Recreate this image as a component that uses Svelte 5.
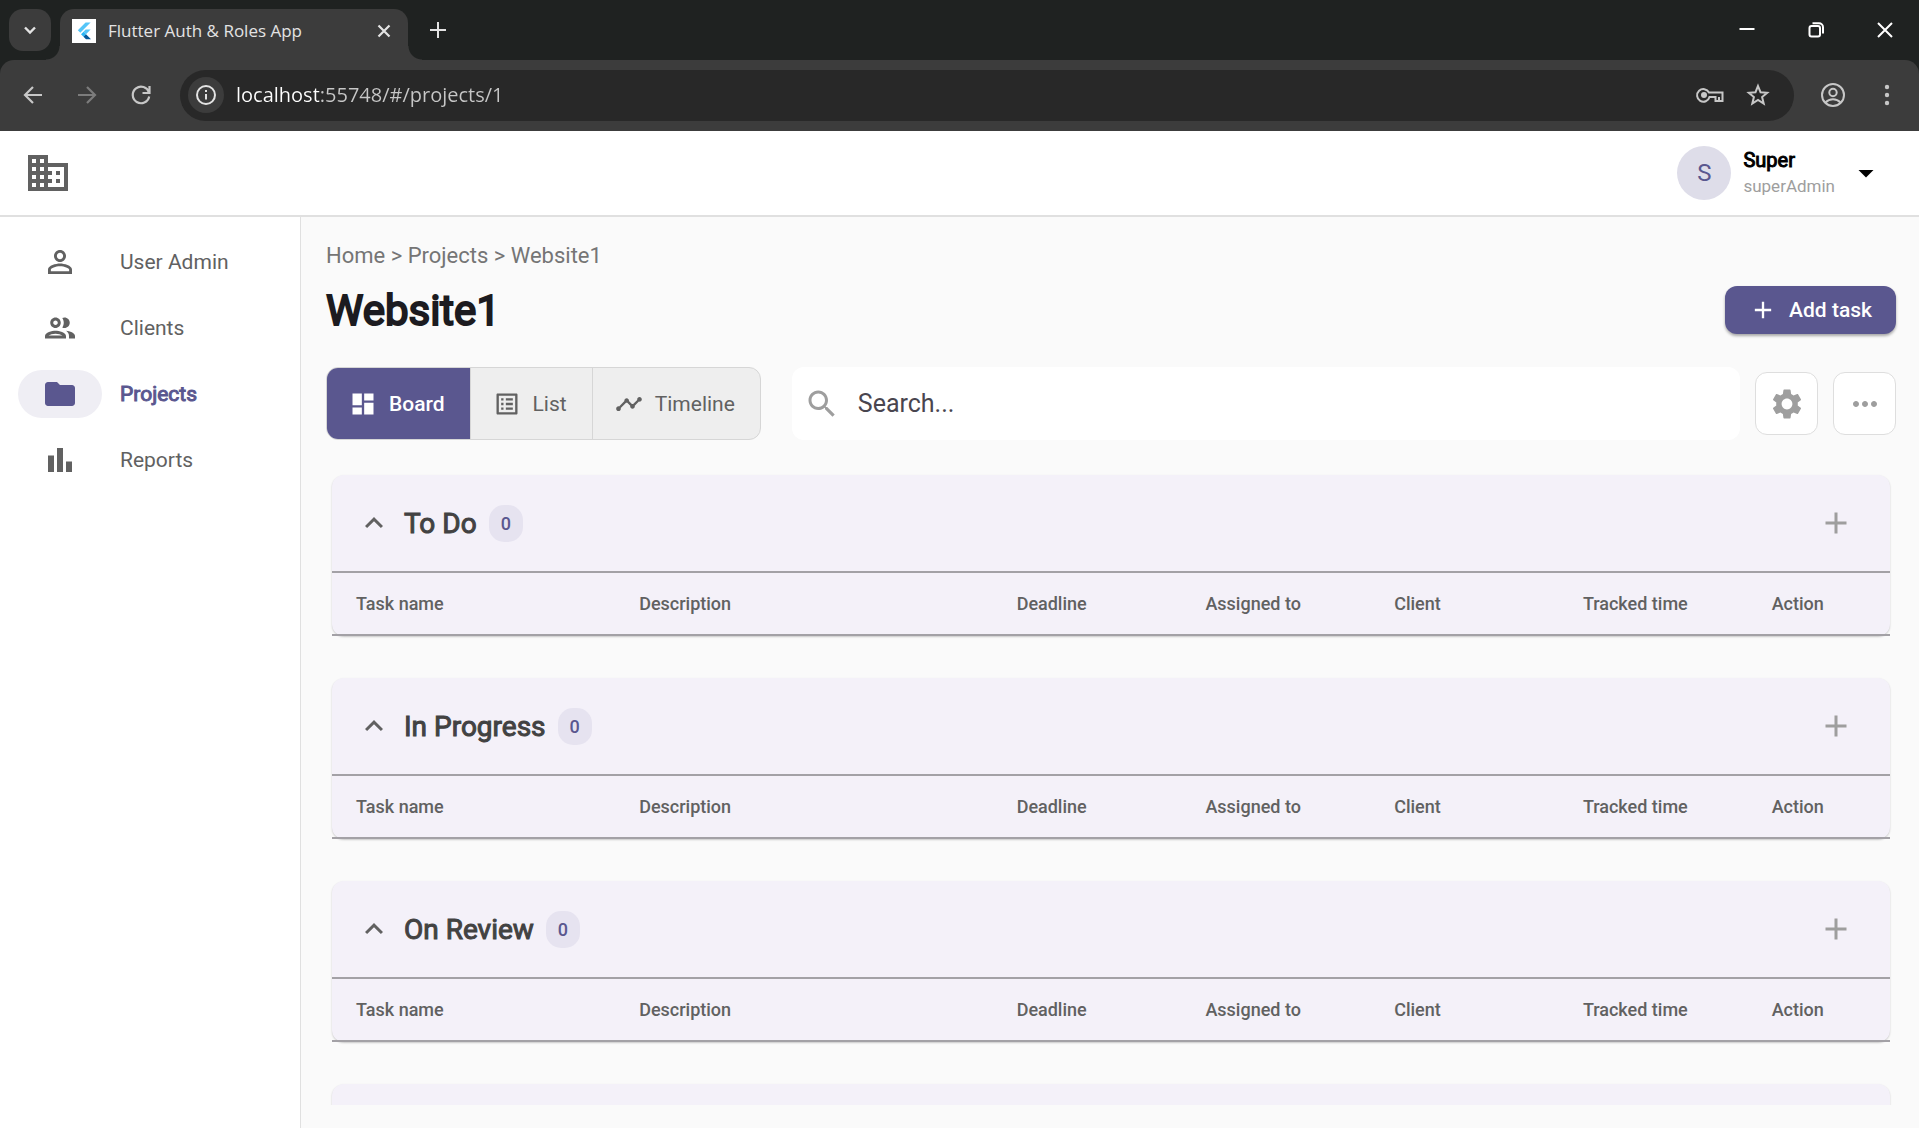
<script>
  const icons = {
    business: 'M12 7V3H2v18h20V7H12zM6 19H4v-2h2v2zm0-4H4v-2h2v2zm0-4H4V9h2v2zm0-4H4V5h2v2zm4 12H8v-2h2v2zm0-4H8v-2h2v2zm0-4H8V9h2v2zm0-4H8V5h2v2zm10 12h-8v-2h2v-2h-2v-2h2v-2h-2V9h8v10zm-2-8h-2v2h2v-2zm0 4h-2v2h2v-2z',
    person: 'M12 5.9c1.16 0 2.1.94 2.1 2.1s-.94 2.1-2.1 2.1S9.9 9.16 9.9 8s.94-2.1 2.1-2.1m0 9c2.97 0 6.1 1.46 6.1 2.1v1.1H5.9V17c0-.64 3.13-2.1 6.1-2.1M12 4C9.79 4 8 5.79 8 8s1.79 4 4 4 4-1.79 4-4-1.79-4-4-4zm0 9c-2.67 0-8 1.34-8 4v3h16v-3c0-2.66-5.33-4-8-4z',
    people: 'M9 13.75c-2.34 0-7 1.17-7 3.5V19h14v-1.75c0-2.33-4.66-3.5-7-3.5zM4.34 17c.84-.58 2.87-1.25 4.66-1.25s3.82.67 4.66 1.25H4.34zM9 12c1.93 0 3.5-1.57 3.5-3.5S10.93 5 9 5 5.5 6.57 5.5 8.5 7.07 12 9 12zm0-5c.83 0 1.5.67 1.5 1.5S9.83 10 9 10s-1.5-.67-1.5-1.5S8.17 7 9 7zm7.04 6.81c1.16.84 1.96 1.96 1.96 3.44V19h4v-1.75c0-2.02-3.5-3.17-5.96-3.44zM15 12c1.93 0 3.5-1.57 3.5-3.5S16.93 5 15 5c-.54 0-1.04.13-1.5.35.63.89 1 1.98 1 3.15s-.37 2.26-1 3.15c.46.22.96.35 1.5.35z',
    folder: 'M10 4H4c-1.1 0-1.99.9-1.99 2L2 18c0 1.1.9 2 2 2h16c1.1 0 2-.9 2-2V8c0-1.1-.9-2-2-2h-8l-2-2z',
    bars: 'M4 9h4v11H4zm12 4h4v7h-4zm-6-9h4v16h-4z',
    board: 'M3 13h8V3H3v10zm0 8h8v-6H3v6zm10 0h8V11h-8v10zm0-18v6h8V3h-8z',
    list: 'M19 5v14H5V5h14m1.1-2H3.9c-.5 0-.9.4-.9.9v16.2c0 .4.4.9.9.9h16.2c.4 0 .9-.5.9-.9V3.9c0-.5-.5-.9-.9-.9zM11 7h6v2h-6V7zm0 4h6v2h-6v-2zm0 4h6v2h-6zM7 7h2v2H7zm0 4h2v2H7zm0 4h2v2H7z',
    timeline: 'M23 8c0 1.1-.9 2-2 2-.18 0-.35-.02-.51-.07l-3.56 3.55c.05.16.07.34.07.52 0 1.1-.9 2-2 2s-2-.9-2-2c0-.18.02-.36.07-.52l-2.55-2.55c-.16.05-.34.07-.52.07s-.36-.02-.52-.07l-4.55 4.56c.05.16.07.33.07.51 0 1.1-.9 2-2 2s-2-.9-2-2 .9-2 2-2c.18 0 .35.02.51.07l4.56-4.55C8.02 9.36 8 9.18 8 9c0-1.1.9-2 2-2s2 .9 2 2c0 .18-.02.36-.07.52l2.55 2.55c.16-.05.34-.07.52-.07s.36.02.52.07l3.55-3.56C19.02 8.35 19 8.18 19 8c0-1.1.9-2 2-2s2 .9 2 2z',
    search: 'M15.5 14h-.79l-.28-.27C15.41 12.59 16 11.11 16 9.5 16 5.91 13.09 3 9.5 3S3 5.91 3 9.5 5.91 16 9.5 16c1.61 0 3.09-.59 4.23-1.57l.27.28v.79l5 4.99L20.49 19l-4.99-5zm-6 0C7.01 14 5 11.99 5 9.5S7.01 5 9.5 5 14 7.01 14 9.5 11.99 14 9.5 14z',
    settings: 'M19.14 12.94c.04-.3.06-.61.06-.94 0-.32-.02-.64-.07-.94l2.03-1.58c.18-.14.23-.41.12-.61l-1.92-3.32c-.12-.22-.37-.29-.59-.22l-2.39.96c-.5-.38-1.03-.7-1.62-.94l-.36-2.54c-.04-.24-.24-.41-.48-.41h-3.84c-.24 0-.43.17-.47.41l-.36 2.54c-.59.24-1.13.57-1.62.94l-2.39-.96c-.22-.08-.47 0-.59.22L2.74 8.87c-.12.21-.08.47.12.61l2.03 1.58c-.05.3-.09.63-.09.94s.02.64.07.94l-2.03 1.58c-.18.14-.23.41-.12.61l1.92 3.32c.12.22.37.29.59.22l2.39-.96c.5.38 1.03.7 1.62.94l.36 2.54c.05.24.24.41.48.41h3.84c.24 0 .44-.17.47-.41l.36-2.54c.59-.24 1.13-.56 1.62-.94l2.39.96c.22.08.47 0 .59-.22l1.92-3.32c.12-.22.07-.47-.12-.61l-2.01-1.58zM12 15.6c-1.98 0-3.6-1.62-3.6-3.6s1.62-3.6 3.6-3.6 3.6 1.62 3.6 3.6-1.62 3.6-3.6 3.6z',
    more: 'M6 10c-1.1 0-2 .9-2 2s.9 2 2 2 2-.9 2-2-.9-2-2-2zm12 0c-1.1 0-2 .9-2 2s.9 2 2 2 2-.9 2-2-.9-2-2-2zm-6 0c-1.1 0-2 .9-2 2s.9 2 2 2 2-.9 2-2-.9-2-2-2z',
    add: 'M19 13h-6v6h-2v-6H5v-2h6V5h2v6h6v2z',
    collapse: 'M12 8l-6 6 1.41 1.41L12 10.83l4.59 4.58L18 14z',
    dropdown: 'M7 10l5 5 5-5z'
  };

  const nav = [
    { label: 'User Admin', icon: 'person', href: '#/users' },
    { label: 'Clients', icon: 'people', href: '#/clients' },
    { label: 'Projects', icon: 'folder', href: '#/projects', active: true },
    { label: 'Reports', icon: 'bars', href: '#/reports' }
  ];
  const views = [
    { label: 'Board', icon: 'board' },
    { label: 'List', icon: 'list' },
    { label: 'Timeline', icon: 'timeline' }
  ];
  const columns = ['Task name', 'Description', 'Deadline', 'Assigned to', 'Client', 'Tracked time', 'Action'];

  let view = $state('Board');
  let query = $state('');
  let address = $state('localhost:55748/#/projects/1');
  let groups = $state([
    { title: 'To Do', count: 0, open: true },
    { title: 'In Progress', count: 0, open: true },
    { title: 'On Review', count: 0, open: true }
  ]);
</script>

{#snippet icon(name, size)}
  <svg class="icon {size}" viewBox="0 0 24 24" aria-hidden="true"><path d={icons[name]} /></svg>
{/snippet}

<div class="window">
  <div class="titlebar">
    <button class="tab-search" aria-label="Search tabs">
      <svg class="line" width="20" height="20" viewBox="0 0 20 20"><path d="M5 7.5l5 5 5-5" stroke-width="2.4" /></svg>
    </button>
    <div class="tab">
      <svg class="favicon" width="24" height="24" viewBox="0 0 24 24" aria-hidden="true">
        <path fill="#fff" d="M0 0h24v24H0z" />
        <path fill="#54c5f8" d="M13.6 3.4h5L8.3 13.7 5.8 11.2z" />
        <path fill="#54c5f8" d="M13.6 10.6h5L14 15.2l-2.5-2.5z" />
        <path fill="#29b6f6" d="M9 15.2l2.5-2.5 2.5 2.5-2.5 2.5z" />
        <path fill="#01579b" d="M11.5 17.7l2.5-2.5 5 5h-5z" />
      </svg>
      <span class="tab-title">Flutter Auth &amp; Roles App</span>
      <button class="bare" aria-label="Close tab">
        <svg class="line" width="20" height="20" viewBox="0 0 20 20"><path d="M4.5 4.5l11 11m0-11l-11 11" stroke-width="2.2" /></svg>
      </button>
    </div>
    <button class="bare new-tab" aria-label="New tab">
      <svg class="line" width="20" height="20" viewBox="0 0 20 20"><path d="M10 2v16M2 10h16" stroke-width="2" /></svg>
    </button>
    <div class="window-controls">
      <button class="bare" aria-label="Minimize">
        <svg class="line" width="20" height="20" viewBox="0 0 20 20"><path d="M2.5 9h15" stroke-width="2" /></svg>
      </button>
      <button class="bare" aria-label="Restore">
        <svg class="line" width="20" height="20" viewBox="0 0 20 20"><rect x="3.5" y="6" width="10.5" height="10.5" rx="2" stroke-width="2" /><path d="M6.5 3.2h6.500a4 4 0 0 1 4 4v6.300" stroke-width="2" /></svg>
      </button>
      <button class="bare" aria-label="Close">
        <svg class="line" width="20" height="20" viewBox="0 0 20 20"><path d="M3 3l14 14m0-14L3 17" stroke-width="2" /></svg>
      </button>
    </div>
  </div>

  <div class="toolbar">
    <div class="history">
      <button class="bare" aria-label="Back">
        <svg class="line" width="24" height="24" viewBox="0 0 24 24"><path d="M21 12H4M12 4l-8 8 8 8" stroke-width="2.2" /></svg>
      </button>
      <button class="bare dim" aria-label="Forward">
        <svg class="line" width="24" height="24" viewBox="0 0 24 24"><path d="M3 12h17M12 4l8 8-8 8" stroke-width="2.2" /></svg>
      </button>
      <button class="bare" aria-label="Reload">
        <svg class="line" width="24" height="24" viewBox="0 0 24 24"><path d="M20 9.500A8.300 8.300 0 1 0 20.200 13.500M20.500 3v7h-7" stroke-width="2.2" /></svg>
      </button>
    </div>
    <div class="omnibox">
      <button class="bare site-info" aria-label="Site information">
        <svg class="line" width="24" height="24" viewBox="0 0 24 24"><circle cx="12" cy="12" r="9" stroke-width="2" /><path d="M12 11v5.500M12 7v2" stroke-width="2" /></svg>
      </button>
      <input class="address" type="text" aria-label="Address" bind:value={address} />
      <button class="bare" aria-label="Passwords">
        <svg class="line" width="30" height="24" viewBox="0 0 30 24"><path d="M14 9.500h13.500v8.500h-7v-4h-6A6.300 6.300 0 1 1 14 9.500z" stroke-width="2" /><path d="M24 14v3" stroke-width="2" /><circle class="solid" cx="9" cy="12" r="3" /></svg>
      </button>
      <button class="bare" aria-label="Bookmark">
        <svg class="line" width="24" height="24" viewBox="0 0 24 24"><path d="M12 3l2.500 6.200 6.700.5-5.100 4.300 1.600 6.500-5.700-3.500-5.700 3.500 1.600-6.500-5.100-4.300 6.700-.5z" stroke-width="2" /></svg>
      </button>
    </div>
    <div class="browser-actions">
      <button class="bare" aria-label="Profile">
        <svg class="line" width="26" height="26" viewBox="0 0 26 26"><circle cx="13" cy="13" r="11" stroke-width="2" /><circle cx="13" cy="10.500" r="3.700" stroke-width="2" /><path d="M5.500 20.500c4-4.500 11-4.500 15 0" stroke-width="2" /></svg>
      </button>
      <button class="bare" aria-label="Browser menu">
        <svg class="line" width="24" height="24" viewBox="0 0 24 24"><circle class="solid" cx="12" cy="4" r="2.200" /><circle class="solid" cx="12" cy="12" r="2.200" /><circle class="solid" cx="12" cy="20" r="2.200" /></svg>
      </button>
    </div>
  </div>

  <header class="app-header">
    <a class="logo" href="#/" aria-label="Company home">{@render icon('business', 'xl')}</a>
    <button class="user">
      <span class="avatar">S</span>
      <span class="identity">
        <span class="name">Super</span>
        <span class="role">superAdmin</span>
      </span>
      {@render icon('dropdown', 'lg')}
    </button>
  </header>

  <div class="body">
    <nav class="sidebar" aria-label="Main">
      {#each nav as item}
        <a href={item.href} class:active={item.active} aria-current={item.active ? 'page' : undefined}>
          <span class="pill">{@render icon(item.icon, 'lg')}</span>
          <span>{item.label}</span>
        </a>
      {/each}
    </nav>

    <main>
      <nav class="crumbs" aria-label="Breadcrumb">
        <a href="#/">Home</a> &gt; <a href="#/projects">Projects</a> &gt; <a href="#/projects/1">Website1</a>
      </nav>
      <div class="heading">
        <h1>Website1</h1>
        <button class="add-task">{@render icon('add', 'sm')}Add task</button>
      </div>

      <div class="controls">
        <div class="views" role="group" aria-label="View">
          {#each views as v}
            <button aria-pressed={view === v.label} onclick={() => (view = v.label)}>
              {@render icon(v.icon, 'sm')}{v.label}
            </button>
          {/each}
        </div>
        <label class="search">
          {@render icon('search', 'lg')}
          <input type="text" placeholder="Search..." aria-label="Search tasks" bind:value={query} />
        </label>
        <div class="tools">
          <button aria-label="Settings">{@render icon('settings', 'lg')}</button>
          <button aria-label="More">{@render icon('more', 'lg')}</button>
        </div>
      </div>

      <div class="groups">
        {#each groups as group}
          <section class="card">
            <div class="card-head">
              <button class="bare" aria-label="Toggle {group.title}" aria-expanded={group.open} onclick={() => (group.open = !group.open)}>
                {@render icon('collapse', 'lg')}
              </button>
              <h2>{group.title}</h2>
              <span class="badge">{group.count}</span>
              <button class="bare add" aria-label="Add to {group.title}">{@render icon('add', 'lg')}</button>
            </div>
            {#if group.open}
              <div class="card-table">
                <table>
                  <thead>
                    <tr>
                      {#each columns as column}
                        <th scope="col">{column}</th>
                      {/each}
                    </tr>
                  </thead>
                </table>
              </div>
            {/if}
          </section>
        {/each}
        <section class="card" aria-hidden="true">
          <div class="card-head"></div>
        </section>
      </div>
    </main>
  </div>
</div>

<style>
  :global(body) {
    margin: 0;
    background: #fafafa;
  }

  .window {
    --accent: #5a578f;
    --ink: #616161;
    --muted: #9e9e9e;
    --frame: #1f2221;
    --chrome: #3c3c3c;
    height: 100vh;
    display: flex;
    flex-direction: column;
    overflow: hidden;
    background: var(--frame);
    font-family: Roboto, 'Liberation Sans', sans-serif;
    font-size: 21px;
    color: var(--ink);
  }

  .window :is(*, *::before, *::after) {
    box-sizing: border-box;
  }

  button,
  input {
    font: inherit;
    color: inherit;
    padding: 0;
    border: 0;
    background: none;
  }

  a {
    color: inherit;
    text-decoration: none;
  }

  svg {
    display: block;
    flex: none;
  }

  .icon {
    fill: currentColor;
  }
  .sm {
    width: 28px;
    height: 28px;
  }
  .lg {
    width: 36px;
    height: 36px;
  }
  .xl {
    width: 48px;
    height: 48px;
  }

  .line {
    fill: none;
    stroke: currentColor;
  }
  .solid {
    fill: currentColor;
    stroke: none;
  }

  .bare {
    display: grid;
    place-items: center;
  }

  /* Browser frame */
  .titlebar {
    flex: none;
    display: flex;
    height: 60px;
    padding: 9px 0 0 9px;
    color: #e3e3e3;
    font-family: 'Open Sans', 'Noto Sans', sans-serif;
    font-size: 17px;
  }
  .tab-search {
    display: grid;
    place-items: center;
    width: 42px;
    height: 42px;
    margin-right: 9px;
    border-radius: 14px;
    background: var(--chrome);
  }
  .tab {
    position: relative;
    display: flex;
    align-items: center;
    width: 348px;
    height: 51px;
    padding: 0 14px 8px 12px;
    border-radius: 14px 14px 0 0;
    background: var(--chrome);
  }
  .tab::before,
  .tab::after {
    content: '';
    position: absolute;
    bottom: 0;
    width: 14px;
    height: 14px;
  }
  .tab::before {
    right: 100%;
    background: radial-gradient(circle at 0 0, transparent 13px, var(--chrome) 14px);
  }
  .tab::after {
    left: 100%;
    background: radial-gradient(circle at 100% 0, transparent 13px, var(--chrome) 14px);
  }
  .tab-title {
    flex: 1;
    margin-left: 12px;
  }
  .new-tab {
    width: 42px;
    height: 42px;
    margin-left: 9px;
  }
  .window-controls {
    display: flex;
    height: 42px;
    margin-left: auto;
    color: #fff;
  }
  .window-controls button {
    width: 69px;
  }

  .toolbar {
    flex: none;
    display: flex;
    align-items: center;
    height: 71px;
    padding-bottom: 1px;
    border-radius: 14px 14px 0 0;
    background: var(--chrome);
    color: #c7c7c7;
  }
  .history {
    display: flex;
    padding: 0 12px 0 6px;
  }
  .history button {
    width: 54px;
    height: 54px;
  }
  .history .dim {
    color: #7c7c7c;
  }
  .omnibox {
    flex: 1;
    display: flex;
    align-items: center;
    height: 51px;
    padding: 0 24px 0 8px;
    border-radius: 26px;
    background: #282828;
  }
  .omnibox > button:last-child {
    margin-left: 21px;
  }
  .site-info {
    width: 36px;
    height: 36px;
    border-radius: 50%;
    background: var(--chrome);
    color: #e3e3e3;
  }
  .address {
    flex: 1;
    min-width: 0;
    height: 36px;
    margin-left: 12px;
    padding-bottom: 2px;
    outline: 0;
    font-family: 'Open Sans', 'Noto Sans', sans-serif;
    font-size: 20px;
    color: transparent;
    background: linear-gradient(90deg, #fff 83px, #c7c7c7 83px) text;
  }
  .browser-actions {
    display: flex;
    align-items: center;
    gap: 29px;
    padding: 0 20px 0 26px;
  }

  /* Application header */
  .app-header {
    flex: none;
    display: flex;
    align-items: center;
    justify-content: space-between;
    height: 86px;
    padding: 0 35px 0 24px;
    background: #fff;
    border-bottom: 2px solid #e0e0e0;
  }
  .user {
    display: flex;
    align-items: center;
    color: #000;
    text-align: left;
  }
  .avatar {
    display: grid;
    place-items: center;
    width: 54px;
    height: 54px;
    margin-right: 12px;
    border-radius: 50%;
    background: #dedde9;
    color: var(--accent);
    font-size: 24px;
  }
  .identity {
    display: flex;
    flex-direction: column;
    gap: 2px;
    margin-right: 13px;
  }
  .name {
    font-size: 20px;
    line-height: 24px;
    -webkit-text-stroke: 1px;
  }
  .role {
    font-size: 17px;
    line-height: 24px;
    color: var(--muted);
  }

  .body {
    flex: 1;
    display: flex;
    min-height: 0;
  }

  .sidebar {
    flex: none;
    width: 301px;
    padding-top: 12px;
    background: #fff;
    border-right: 1px solid #e0e0e0;
  }
  .sidebar a {
    display: flex;
    align-items: center;
    gap: 18px;
    height: 66px;
    padding-left: 18px;
  }
  .pill {
    display: grid;
    place-items: center;
    width: 84px;
    height: 48px;
    border-radius: 24px;
  }
  .active {
    color: var(--accent);
    -webkit-text-stroke: 1px;
  }
  .active .pill {
    background: #efeef4;
  }

  /* Project page */
  main {
    flex: 1;
    min-width: 0;
    display: flex;
    flex-direction: column;
    padding: 24px 23px 23px 25px;
    background: #fafafa;
  }
  .crumbs {
    font-size: 22px;
    line-height: 30px;
    color: #757575;
  }
  .heading {
    display: flex;
    align-items: center;
    justify-content: space-between;
    height: 48px;
    margin-top: 15px;
  }
  h1 {
    margin: 0;
    font-size: 42px;
    font-weight: 400;
    color: #1c1b20;
    -webkit-text-stroke: 2px;
  }
  .add-task {
    display: flex;
    align-items: center;
    gap: 12px;
    height: 48px;
    padding: 0 24px;
    border-radius: 12px;
    background: var(--accent);
    color: #fff;
    font-weight: 500;
    box-shadow: 0 2px 3px #0005;
  }

  .controls {
    display: flex;
    align-items: center;
    margin-top: 33px;
  }
  .views {
    display: flex;
    height: 73px;
    border: 1px solid #d6d6d6;
    border-radius: 12px;
    background: #eee;
    overflow: hidden;
  }
  .views button {
    display: flex;
    align-items: center;
    gap: 12px;
    padding: 0 25px 0 22px;
  }
  .views button + button {
    border-left: 1px solid #d6d6d6;
  }
  .views button[aria-pressed='true'] {
    background: var(--accent);
    color: #fff;
    font-weight: 500;
  }
  .search {
    flex: 1;
    display: flex;
    align-items: center;
    height: 73px;
    margin: 0 15px 0 31px;
    padding: 0 12px;
    border-radius: 12px;
    background: #fff;
    color: var(--muted);
  }
  .search input {
    flex: 1;
    min-width: 0;
    margin-left: 18px;
    outline: 0;
    font-size: 25px;
    color: #49454f;
  }
  .search input::placeholder {
    color: #49454f;
    opacity: 1;
  }
  .tools {
    display: flex;
    gap: 15px;
    color: var(--muted);
  }
  .tools button {
    display: grid;
    place-items: center;
    width: 63px;
    height: 63px;
    border: 1px solid #dedede;
    border-radius: 12px;
    background: #fff;
  }

  .groups {
    flex: 1;
    min-height: 0;
    display: flex;
    flex-direction: column;
    gap: 42px;
    margin-top: 29px;
    padding: 6px;
    overflow: hidden;
  }
  .card {
    flex: none;
    border-radius: 12px;
    background: #f4f1f9;
    box-shadow: 0 1px 2px #0003;
  }
  .card-head {
    display: flex;
    align-items: center;
    height: 96px;
    padding: 0 36px 0 24px;
  }
  h2 {
    margin: 0 12px;
    font-size: 28px;
    font-weight: 400;
    color: #424242;
    -webkit-text-stroke: 1px;
  }
  .badge {
    padding: 6px 12px;
    border-radius: 15px;
    background: #e6e3f0;
    color: var(--accent);
    font-size: 18px;
    line-height: 25px;
    font-weight: 500;
  }
  .add {
    margin-left: auto;
    color: var(--muted);
  }
  .card-table {
    padding: 0 24px;
    border: solid #a3a1a6;
    border-width: 2px 0;
  }
  table {
    width: 100%;
    table-layout: fixed;
    border-collapse: collapse;
  }
  th {
    width: 12.5%;
    height: 61px;
    padding: 0;
    font-size: 18px;
    font-weight: 500;
    text-align: left;
    white-space: nowrap;
  }
  th:first-child {
    width: 18.75%;
  }
  th:nth-child(2) {
    width: 25%;
  }
  th:last-child {
    width: 6.25%;
  }
</style>
